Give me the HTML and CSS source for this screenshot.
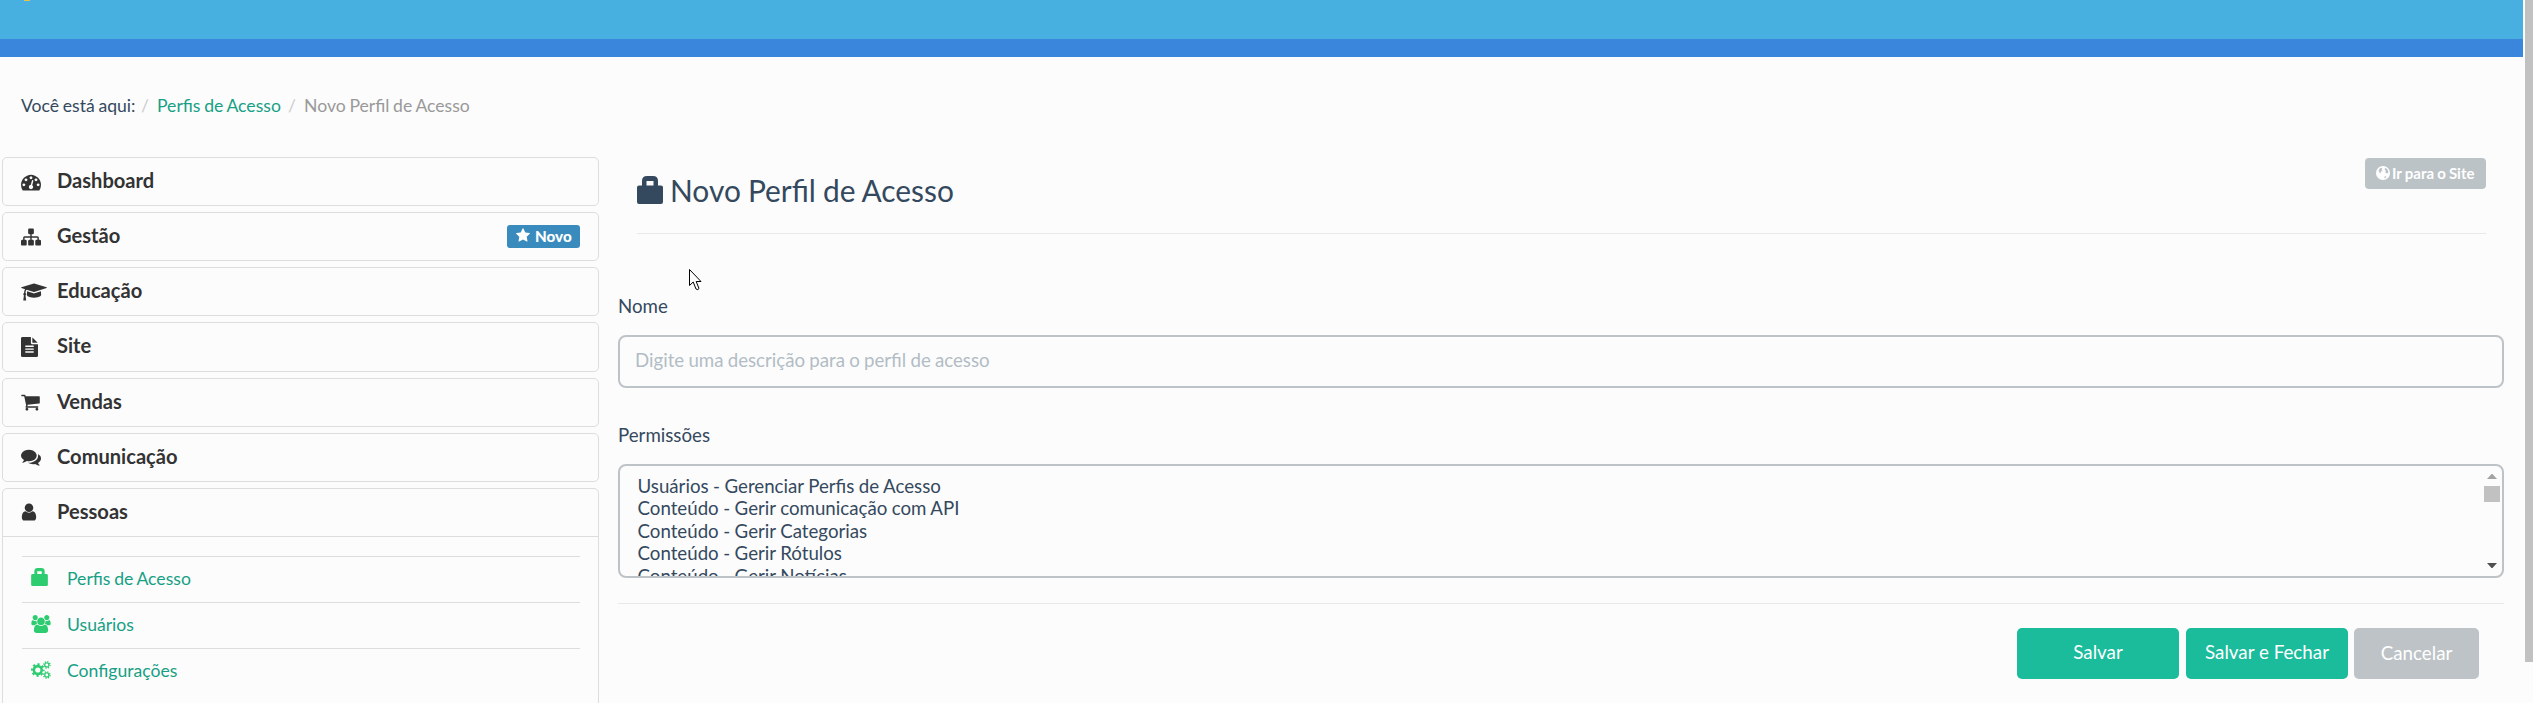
FILE: index.html
```
<!DOCTYPE html>
<html lang="pt-BR">
<head>
<meta charset="utf-8">
<title>Novo Perfil de Acesso</title>
<link rel="stylesheet" href="styles.css">
</head>
<body>
<svg class="defs" aria-hidden="true">
  <symbol id="bag" viewBox="0 0 26 28"><path fill-rule="evenodd" d="M2 9.500H5V5Q5 0 10 0H16Q21 0 21 5V9.500H24Q26 9.500 26 11.500V26Q26 28 24 28H2Q0 28 0 26V11.500Q0 9.500 2 9.500ZM9.500 9.500H16.500V5H9.500Z"/></symbol>
</svg>
<div class="page">
  <div class="window">
    <header class="topbar"><span class="logo-tip"></span></header>
    <div class="navbar"></div>
    <nav class="breadcrumb"><span class="here">Você está aqui:</span><span class="sep">/</span><a class="crumb-link">Perfis de Acesso</a><span class="sep">/</span><span class="current">Novo Perfil de Acesso</span></nav>
    <div class="columns">
      <aside class="sidebar">
        <div class="panel"><div class="panel-head"><svg class="ico w20" viewBox="0 0 1792 1792"><path d="M384 1152q0-53-37.500-90.500t-90.500-37.500-90.500 37.500-37.500 90.500 37.500 90.500 90.500 37.500 90.500-37.500 37.500-90.500zm192-448q0-53-37.500-90.500t-90.500-37.500-90.500 37.500-37.500 90.500 37.500 90.500 90.500 37.500 90.500-37.500 37.500-90.500zm428 481l101-382q6-26-7.500-48.500t-38.500-29.500-48 6.500-30 39.500l-101 382q-60 5-107 43.500t-63 98.500q-20 77 20 146t117 89 146-20 89-117q16-60-6-117t-72-91zm660-33q0-53-37.500-90.500t-90.500-37.500-90.500 37.500-37.500 90.500 37.500 90.500 90.500 37.500 90.500-37.500 37.500-90.500zm-640-640q0-53-37.500-90.500t-90.500-37.500-90.500 37.500-37.500 90.500 37.500 90.500 90.500 37.500 90.500-37.500 37.500-90.500zm448 192q0-53-37.500-90.500t-90.500-37.500-90.500 37.500-37.500 90.500 37.500 90.500 90.500 37.500 90.500-37.500 37.500-90.500zm320 448q0 261-141 483-19 29-54 29h-1402q-35 0-54-29-141-221-141-483 0-182 71-348t191-286 286-191 348-71 348 71 286 191 191 286 71 348z"/></svg><span>Dashboard</span></div></div>
        <div class="panel"><div class="panel-head"><svg class="ico w20" viewBox="0 0 1792 1792"><path d="M1792 1248v320q0 40-28 68t-68 28h-320q-40 0-68-28t-28-68v-320q0-40 28-68t68-28h96v-192h-512v192h96q40 0 68 28t28 68v320q0 40-28 68t-68 28h-320q-40 0-68-28t-28-68v-320q0-40 28-68t68-28h96v-192h-512v192h96q40 0 68 28t28 68v320q0 40-28 68t-68 28h-320q-40 0-68-28t-28-68v-320q0-40 28-68t68-28h96v-192q0-52 38-90t90-38h512v-192h-96q-40 0-68-28t-28-68v-320q0-40 28-68t68-28h320q40 0 68 28t28 68v320q0 40-28 68t-68 28h-96v192h512q52 0 90 38t38 90v192h96q40 0 68 28t28 68z"/></svg><span>Gestão</span><b class="badge"><svg viewBox="64 0 1664 1792"><path d="M1728 647q0 22-26 48l-363 354 86 500q1 7 1 20 0 21-10.500 35.500t-30.500 14.500q-19 0-40-12l-449-236-449 236q-22 12-40 12-21 0-31.500-14.500t-10.500-35.500q0-6 2-20l86-500-364-354q-25-27-25-48 0-37 56-46l502-73 225-455q19-41 49-41t49 41l225 455 502 73q56 9 56 46z"/></svg><span>Novo</span></b></div></div>
        <div class="panel"><div class="panel-head"><svg class="ico w26" viewBox="0 0 2304 1792"><path d="M1774 836l18 316q4 69-82 128t-235 93.500-323 34.500-323-34.500-235-93.500-82-128l18-316 574 181q22 7 48 7t48-7zm530-324q0 23-22 31l-1120 352q-4 1-10 1t-10-1l-652-206q-43 34-71 111.500t-34 178.500q63 36 63 109 0 69-58 107l58 433q2 14-8 25-9 11-24 11h-192q-15 0-24-11-10-11-8-25l58-433q-58-38-58-107 0-73 65-111 11-207 98-330l-333-104q-22-8-22-31t22-31l1120-352q4-1 10-1t10 1l1120 352q22 8 22 31z"/></svg><span>Educação</span></div></div>
        <div class="panel"><div class="panel-head"><svg class="ico w17" viewBox="128 0 1536 1792"><path d="M1596 476q14 14 28 36h-472v-472q22 14 36 28zm-476 164h544v1056q0 40-28 68t-68 28h-1344q-40 0-68-28t-28-68v-1600q0-40 28-68t68-28h800v544q0 40 28 68t68 28zm160 736v-64q0-14-9-23t-23-9h-704q-14 0-23 9t-9 23v64q0 14 9 23t23 9h704q14 0 23-9t9-23zm0-256v-64q0-14-9-23t-23-9h-704q-14 0-23 9t-9 23v64q0 14 9 23t23 9h704q14 0 23-9t9-23zm0-256v-64q0-14-9-23t-23-9h-704q-14 0-23 9t-9 23v64q0 14 9 23t23 9h704q14 0 23-9t9-23z"/></svg><span>Site</span></div></div>
        <div class="panel"><div class="panel-head"><svg class="ico w19" viewBox="64 0 1664 1792"><path d="M704 1536q0 52-38 90t-90 38-90-38-38-90 38-90 90-38 90 38 38 90zm896 0q0 52-38 90t-90 38-90-38-38-90 38-90 90-38 90 38 38 90zm128-1088v512q0 24-16.500 42.500t-40.500 21.500l-1044 122q13 60 13 70 0 16-24 64h920q26 0 45 19t19 45-19 45-45 19h-1024q-26 0-45-19t-19-45q0-11 8-31.500t16-36 21.500-40 15.500-29.500l-177-823h-204q-26 0-45-19t-19-45 19-45 45-19h256q16 0 28.500 6.500t19.500 15.500 13 24.500 8 26 5.500 29.500 4.500 26h1201q26 0 45 19t19 45z"/></svg><span>Vendas</span></div></div>
        <div class="panel"><div class="panel-head"><svg class="ico w20" viewBox="0 0 1792 1792"><path d="M1408 768q0 139-94 257t-256.500 186.500-353.500 68.500q-86 0-176-16-124 88-278 128-36 9-86 16h-3q-11 0-20.500-8t-11.500-21q-1-3-1-6.500t.5-6.500 2-6l2.500-5 3.500-5.500 4-5 4.500-5 4-4.500q5-6 23-25t26-29.500 22.500-29 25-38.500 20.500-44q-124-72-195-177t-71-224q0-139 94-257t256.500-186.500 353.500-68.500 353.500 68.500 256.500 186.500 94 257zm384 256q0 120-71 224.500t-195 176.500q10 24 20.500 44t25 38.500 22.500 29 26 29.500 23 25q1 1 4 4.500t4.500 5 4 5 3.500 5.500l2.500 5 2 6 .5 6.500-1 6.500q-3 14-13 22t-22 7q-50-7-86-16-154-40-278-128-90 16-176 16-271 0-472-132 58 4 88 4 161 0 309-45t264-129q125-92 192-212t67-254q0-77-23-152 129 71 204 178t75 230z"/></svg><span>Comunicação</span></div></div>
        <div class="panel open"><div class="panel-head"><svg class="ico w16" viewBox="256 0 1280 1792"><path d="M1536 1399q0 109-62.500 187t-150.500 78h-854q-88 0-150.500-78t-62.500-187q0-85 8.500-160.500t31.500-152 58.500-131 94-89 134.500-34.500q131 128 313 128t313-128q76 0 134.500 34.500t94 89 58.500 131 31.500 152 8.500 160.500zm-256-887q0 159-112.500 271.500t-271.500 112.500-271.500-112.500-112.500-271.500 112.500-271.500 271.500-112.500 271.500 112.500 112.500 271.500z"/></svg><span>Pessoas</span></div>
          <div class="submenu">
            <a class="sub"><svg class="sub-bag"><use href="#bag"/></svg><span>Perfis de Acesso</span></a>
            <a class="sub"><svg class="sub-ico" viewBox="64 0 1920 1792"><path d="M657 896q-162 5-265 128h-134q-82 0-138-40.500t-56-118.500q0-353 124-353 6 0 43.500 21t97.500 42.500 119 21.500q67 0 133-23-5 37-5 66 0 159 81 256zm1071 637q0 120-73 189.500t-194 69.500h-874q-121 0-194-69.500t-73-189.500q0-53 3.500-103.500t14-109 26.500-108.500 43-97.500 62-81 85.500-53.500 111.500-20q10 0 43 21.500t73 48 107 48 135 21.500 135-21.500 107-48 73-48 43-21.500q61 0 111.500 20t85.500 53.500 62 81 43 97.500 26.500 108.500 14 109 3.500 103.500zm-1024-1277q0 106-75 181t-181 75-181-75-75-181 75-181 181-75 181 75 75 181zm704 384q0 159-112.500 271.500t-271.500 112.500-271.500-112.500-112.500-271.500 112.500-271.500 271.500-112.500 271.500 112.500 112.500 271.500zm576 225q0 78-56 118.500t-138 40.500h-134q-103-123-265-128 81-97 81-256 0-29-5-66 66 23 133 23 59 0 119-21.500t97.500-42.500 43.500-21q124 0 124 353zm-128-609q0 106-75 181t-181 75-181-75-75-181 75-181 181-75 181 75 75 181z"/></svg><span>Usuários</span></a>
            <a class="sub"><svg class="sub-ico" viewBox="0 0 20 18"><g fill="none" stroke="#2ecc71"><circle cx="6.800" cy="9" r="3.900" stroke-width="2.600"/><circle cx="6.800" cy="9" r="5.800" stroke-width="2" stroke-dasharray="2.278 2.278" stroke-dashoffset="1.139"/><circle cx="15.800" cy="3.900" r="2.100" stroke-width="1.300"/><circle cx="15.800" cy="3.900" r="3.200" stroke-width="1.300" stroke-dasharray="1.257 1.257"/><circle cx="15.800" cy="14" r="2.100" stroke-width="1.300"/><circle cx="15.800" cy="14" r="3.200" stroke-width="1.300" stroke-dasharray="1.257 1.257"/></g></svg><span>Configurações</span></a>
          </div>
        </div>
      </aside>
      <main class="content">
        <div class="title-row">
          <svg class="title-ico"><use href="#bag"/></svg>
          <h1>Novo Perfil de Acesso</h1>
          <a class="site-btn"><svg viewBox="0 0 14 14"><circle cx="7" cy="7" r="7"/><path fill="#bcc3c7" d="M3.800 2.600 5.200 1.800 6.300 2.300 5.700 3.400 6.600 4.200 5.400 5.300 4.500 6.300 5.200 7.300 4.300 7.300 3 5.900 2.600 4.300ZM9 2 10.500 2.500 12 4.300 12.400 6.500 11.300 7.600 10 7 9.200 5.900 9.800 4.700 8.600 3.600ZM8.600 10.500 10 10.300 10.300 11.200 8.900 12.300 8.200 12Z"/></svg><span>Ir para o Site</span></a>
        </div>
        <label class="label-name">Nome</label>
        <div class="input"><span>Digite uma descrição para o perfil de acesso</span></div>
        <label class="label-perm">Permissões</label>
        <div class="select">
          <div class="options"><div>Usuários - Gerenciar Perfis de Acesso</div><div>Conteúdo - Gerir comunicação com API</div><div>Conteúdo - Gerir Categorias</div><div>Conteúdo - Gerir Rótulos</div><div>Conteúdo - Gerir Notícias</div></div>
          <div class="list-scroll"><svg class="up" viewBox="0 0 10 5"><path d="M0 5 4.500 0H5.500L10 5Z"/></svg><i class="thumb"></i><svg class="down" viewBox="0 0 10 5"><path d="M0 0 4.500 5H5.500L10 0Z"/></svg></div>
        </div>
        <div class="actions"><button class="btn save">Salvar</button><button class="btn save save-close">Salvar e Fechar</button><button class="btn cancel">Cancelar</button></div>
      </main>
    </div>
  </div>
  <div class="scrollbar"></div>
</div>
<svg class="cursor" viewBox="0 0 13 22"><path d="M.5.5V16.500L4.200 13 7 20Q9 21.500 10 19.500L7.200 12.500H12Z" fill="#fff" stroke="#000"/></svg>
</body>
</html>
```
FILE: styles.css
```
* { box-sizing: border-box; }
body { margin: 0; background: #fcfcfc; font-family: Lato, "Liberation Sans", sans-serif; font-size: 18px; color: #34495e; }
svg { display: block; flex: none; }
.defs { position: absolute; width: 0; height: 0; }
.page { display: flex; justify-content: space-between; height: 703px; overflow: hidden; }
.window { width: 2523px; }
.scrollbar { width: 8px; height: 662px; background: #c1c1c1; }
.topbar { height: 39px; padding-left: 24px; background: #48b0e1; }
.logo-tip { display: block; width: 6px; height: 1px; background: #e8c34a; }
.navbar { height: 18px; background: #3a86dc; }
.breadcrumb { display: flex; height: 100px; padding: 38px 0 0 21px; font-size: 17.600px; word-spacing: -0.800px; line-height: 22px; white-space: nowrap; }
.here { width: 120px; }
.sep { width: 16px; color: #ccc; }
.crumb-link { width: 131px; color: #16a085; }
.current { color: #999; }
.columns { display: flex; padding-left: 2px; }
.sidebar { width: 597px; display: flex; flex-direction: column; gap: 6px; }
.panel { height: 49.170px; border: 1px solid #ddd; border-radius: 5px; }
.panel-head { height: 47px; display: grid; grid-template-columns: 36px 1fr auto; align-items: center; padding: 0 18px; color: #333; fill: #333; font-size: 20.100px; font-weight: 700; }
.panel-head > span { margin-bottom: 3px; }
.ico { height: 20px; }
.w20 { width: 20px; } .w26 { width: 26px; } .w17 { width: 17px; } .w19 { width: 19px; } .w16 { width: 16px; }
.badge { width: 73px; height: 23px; display: flex; align-items: center; gap: 5px; padding: 0 0 2px 9px; border-radius: 3px; background: #3a8bbd; color: #fff; fill: #fff; font-size: 15.200px; line-height: 20px; }
.badge svg { width: 14px; height: 15px; }
.open { height: 230px; border-radius: 5px 5px 0 0; }
.submenu { padding: 19px 18px 0 19px; border-top: 1px solid #ddd; }
.sub { height: 46px; display: grid; grid-template-columns: 36px 1fr; align-items: center; padding-left: 9px; border-top: 1px solid #ddd; color: #16a085; fill: #2ecc71; font-size: 17.600px; word-spacing: -0.800px; }
.sub > span { margin-bottom: 2px; }
.sub-bag { width: 17px; height: 18px; margin-bottom: 4px; }
.sub-ico { width: 20px; height: 18px; margin-bottom: 2px; }
.content { width: 1886px; margin-left: 19px; }
.title-row { display: flex; align-items: flex-start; height: 77px; margin: 0 18px 0 19px; border-bottom: 1px solid #e7e9ea; }
.title-ico { width: 26px; height: 28px; margin-top: 19px; fill: #34495e; }
h1 { margin: 15px auto 0 7px; font-size: 29.900px; word-spacing: -0.600px; line-height: 36px; font-weight: 400; }
.site-btn { display: flex; align-items: center; gap: 2px; width: 121px; height: 31px; margin-top: 1px; padding: 0 0 1px 11px; border-radius: 4px; background: #bcc3c7; color: #fff; fill: #fff; font-size: 15px; word-spacing: -0.500px; font-weight: 700; white-space: nowrap; }
.site-btn svg { width: 14px; height: 14px; margin-bottom: 1px; }
.label-name, .label-perm { display: block; font-size: 18.700px; line-height: 24px; }
.label-name { margin-top: 60px; height: 41px; }
.input { height: 53px; padding: 0 15px; border: 2px solid #bdc3c7; border-radius: 8px; color: #b2bcc5; font-size: 18.700px; word-spacing: -0.600px; line-height: 47px; }
.label-perm { height: 76px; padding-top: 35px; }
.select { display: flex; justify-content: space-between; height: 114px; border: 2px solid #bdc3c7; border-radius: 8px; overflow: hidden; }
.options { padding: 9px 0 0 17.500px; font-size: 18.700px; word-spacing: -0.300px; line-height: 22.400px; white-space: nowrap; }
.list-scroll { display: flex; flex-direction: column; align-items: center; width: 16px; margin-right: 2px; padding: 8px 0; }
.up, .down { width: 10px; height: 5px; }
.up { fill: #a3a3a3; } .down { fill: #505050; margin-top: auto; }
.thumb { width: 16px; height: 16px; margin-top: 7px; background: #c1c1c1; }
.actions { display: flex; justify-content: flex-end; margin-top: 25px; padding: 24px 25px 0 0; border-top: 1px solid #e7e9ea; }
.btn { height: 51px; padding: 0 0 3px; border: 0; border-radius: 5px; color: #fff; font: 400 18.800px/24px Lato, sans-serif; }
.save { width: 162px; margin-right: 7px; background: #1abc9c; }
.save-close { margin-right: 6px; }
.cancel { width: 125px; background: #bdc3c7; padding-bottom: 1px; }
.cursor { position: absolute; left: 689px; top: 269px; width: 13px; height: 22px; }
```
